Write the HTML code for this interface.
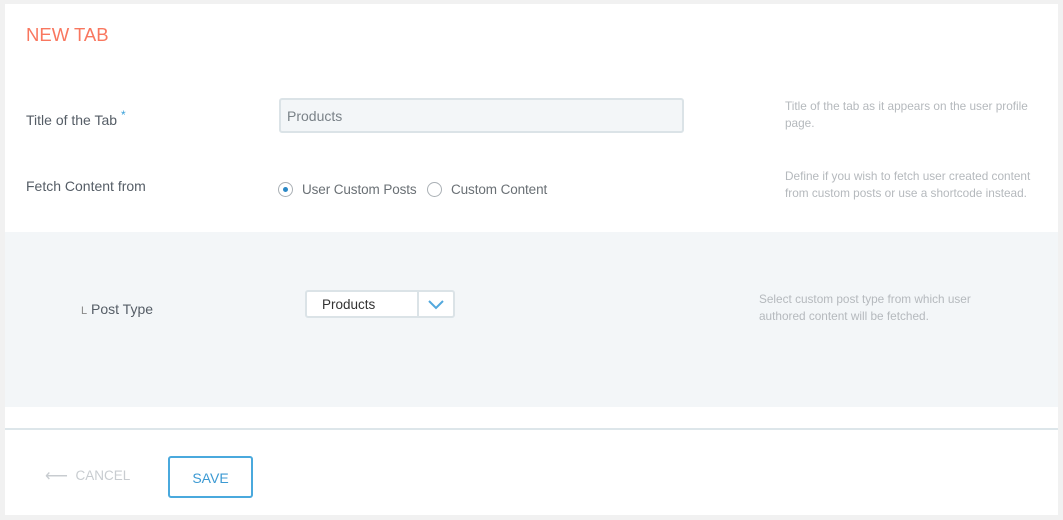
<!DOCTYPE html>
<html><head><meta charset="utf-8"><style>
*{margin:0;padding:0;box-sizing:border-box}
body{width:1063px;height:520px;background:#f1f1f1;font-family:"Liberation Sans",sans-serif;position:relative;overflow:hidden}
.p{position:absolute;left:5px;top:4px;width:1053px;height:511px;background:#fff}
.a{position:absolute;white-space:nowrap}
.lbl{color:#555d66;font-size:14px}
.help{color:#b5b9bd;font-size:11.8px;line-height:17px;white-space:normal}
.band{position:absolute;left:5px;top:232px;width:1053px;height:175px;background:#f3f6f8}
.line{position:absolute;left:5px;top:428px;width:1053px;height:2px;background:#dde6ea}
.radio{position:absolute;width:15px;height:15px;border:1px solid #aab0b5;border-radius:50%;background:#fff}
</style></head><body>
<div class="p"></div>
<div class="band"></div>
<div class="line"></div>
<div class="a" style="left:26px;top:24px;font-size:18.5px;color:#f9775f">NEW TAB</div>

<div class="a lbl" style="left:26px;top:112px">Title of the Tab <span style="color:#3ba1da;font-size:12px;position:relative;top:-6px">*</span></div>
<div class="a" style="left:279px;top:98px;width:405px;height:35px;background:#f3f6f8;border:2px solid #dbe3e7;border-radius:3px;padding:8px 0 0 6px;font-size:14px;color:#7a8288">Products</div>
<div class="a help" style="left:785px;top:98px;width:262px">Title of the tab as it appears on the user profile page.</div>

<div class="a lbl" style="left:26px;top:178px">Fetch Content from</div>
<div class="radio" style="left:278px;top:182px"><div style="position:absolute;left:4px;top:4px;width:5px;height:5px;border-radius:50%;background:#2a88c6"></div></div>
<div class="a lbl" style="left:302px;top:182px;color:#6a7075;font-size:13.5px;letter-spacing:-0.1px">User Custom Posts</div>
<div class="radio" style="left:427px;top:182px"></div>
<div class="a lbl" style="left:451px;top:182px;color:#6a7075;font-size:13.5px;letter-spacing:-0.1px">Custom Content</div>
<div class="a help" style="left:785px;top:168px;width:268px">Define if you wish to fetch user created content from custom posts or use a shortcode instead.</div>

<div class="a lbl" style="left:81px;top:301px"><span style="font-size:11px;color:#888">L</span> Post Type</div>
<div class="a" style="left:305px;top:290px;width:150px;height:28px;background:#fff;border:2px solid #dbe3e7;border-radius:3px">
<div class="a" style="left:15px;top:5px;font-size:13.5px;color:#333">Products</div>
<div class="a" style="left:110px;top:0;width:2px;height:24px;background:#dbe3e7"></div>
<svg class="a" style="left:119px;top:7px" width="20" height="12" viewBox="0 0 20 12"><path d="M3 2 L10 9 L17 2" fill="none" stroke="#52a8dd" stroke-width="2"/></svg>
</div>
<div class="a help" style="left:759px;top:291px;width:225px">Select custom post type from which user authored content will be fetched.</div>

<div class="a" style="left:45px;top:465px;font-size:13.5px;color:#c8ccd0"><span style="font-size:16px;position:relative;top:1px">&#10229;</span>&nbsp; CANCEL</div>
<div class="a" style="left:168px;top:456px;width:85px;height:42px;border:2px solid #4aa9dd;border-radius:3px;color:#3c9ad3;font-size:14px;text-align:center;line-height:40px">SAVE</div>
</body></html>
